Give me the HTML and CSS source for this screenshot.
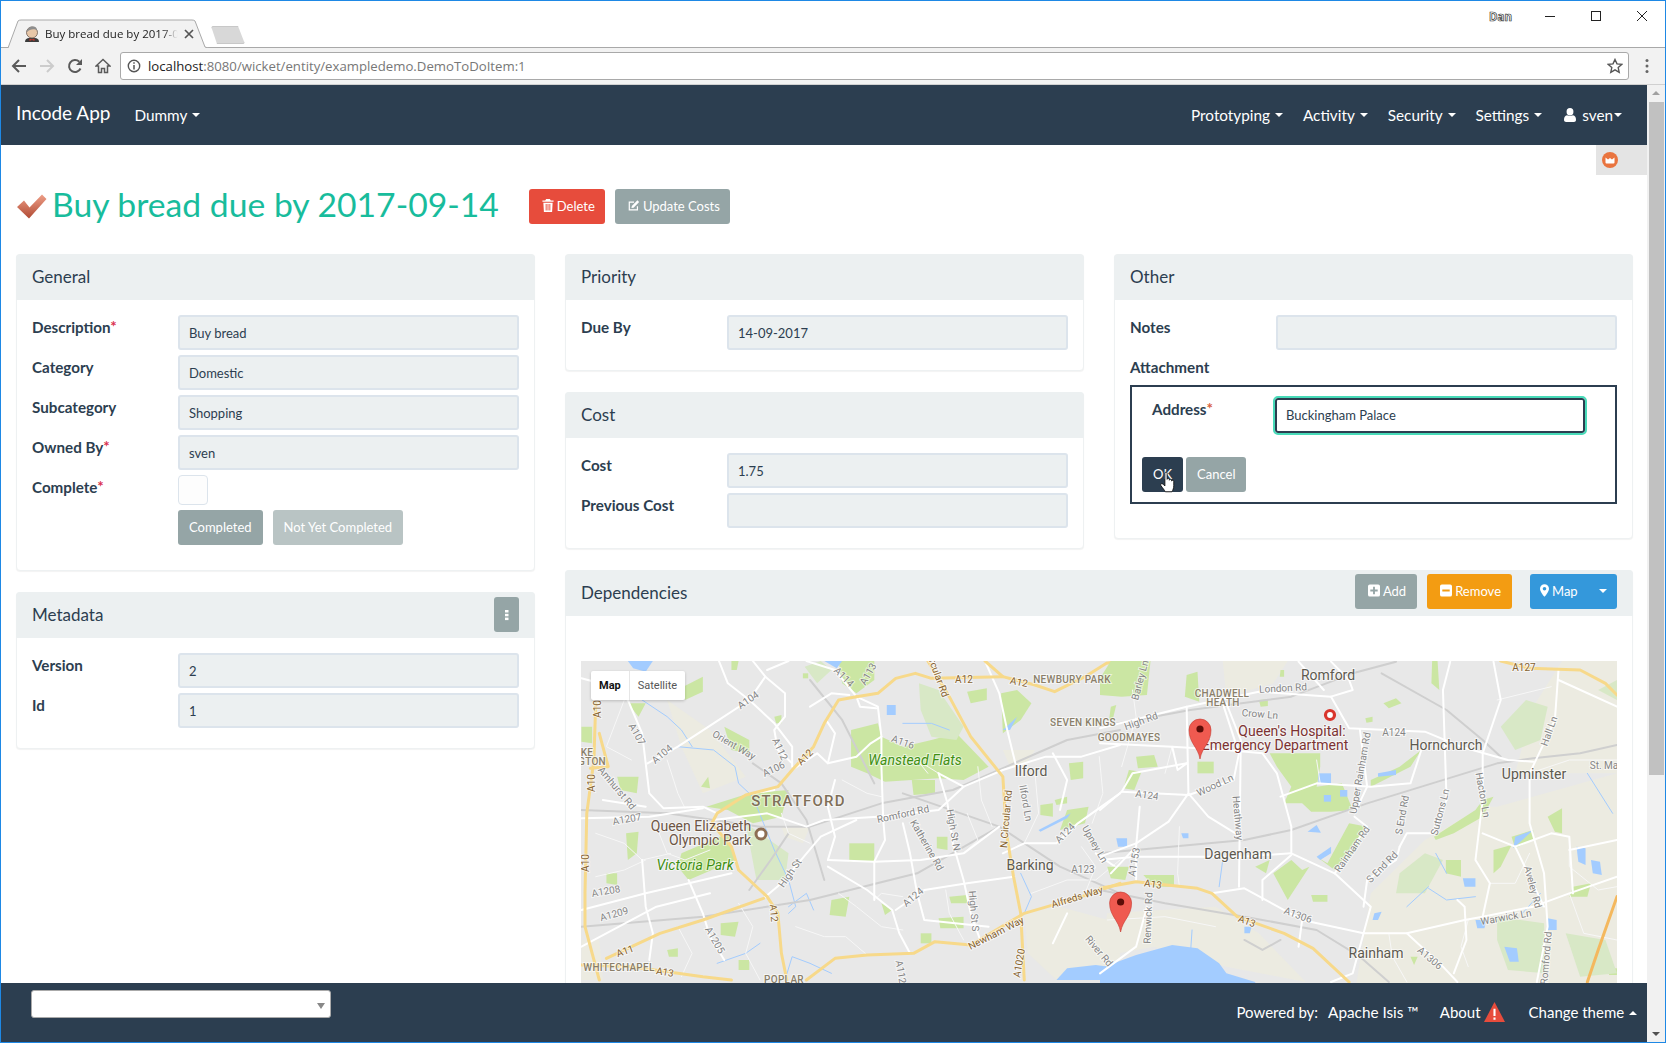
FILE: index.html
```html
<!DOCTYPE html>
<html>
<head>
<meta http-equiv="Content-Type" content="text/html; charset=utf-8"/>
<title>Buy bread due by 2017-09-14</title>
<link rel="stylesheet" href="styles.css">
</head>
<body>
<div class="window">

  <!-- browser chrome -->
  <div class="tabstrip">
    <div class="tab">
      <svg class="tab-shape" viewBox="0 0 206 29"><path d="M0 29h1L11 2q1-1 3-1h171q2 0 3 1l10 26q1 1 8 1" fill="#f2f2f2" stroke="#a9a9a9"/></svg>
      <svg class="favicon" viewBox="0 0 16 16"><path fill="#3b3b3b" d="M1 16c0-3 2-4 4-4l6 0c2 0 4 1 4 4z"/><circle cx="8" cy="6.5" r="5.5" fill="#e8c7a8" stroke="#6b5a50" stroke-width=".8"/><path fill="#8d8d8d" d="M3 6c0-4 3-5.500 6-5.500s4 2 4 4c-2-2-7-2-10 1.500z"/><path fill="#c23b2e" d="M5.500 12.500l2.500 1 2.500-1v2.500l-2.500-1-2.500 1z"/></svg>
      <span class="tab-title">Buy bread due by 2017-0</span>
      <svg class="tab-close" viewBox="0 0 10 10"><path d="M1 1l8 8M9 1l-8 8" stroke="#555" stroke-width="1.700"/></svg>
    </div>
    <div class="newtab"></div>
    <div class="winctl">
      <span class="winuser">Dan</span>
      <svg class="winbtn" viewBox="0 0 12 12"><path d="M1 6.500h10" stroke="#222" stroke-width="1"/></svg>
      <svg class="winbtn" viewBox="0 0 12 12"><rect x="1.500" y="1.500" width="9" height="9" fill="none" stroke="#222" stroke-width="1"/></svg>
      <svg class="winbtn" viewBox="0 0 12 12"><path d="M1 1l10 10M11 1l-10 10" stroke="#222" stroke-width="1"/></svg>
    </div>
  </div>
  <div class="toolbar">
    <svg class="tool" viewBox="0 0 16 16"><path d="M15 8H2M8 2L2 8l6 6" fill="none" stroke="#5a5a5a" stroke-width="2"/></svg>
    <svg class="tool" viewBox="0 0 16 16"><path d="M1 8h13M8 2l6 6-6 6" fill="none" stroke="#ccc" stroke-width="2"/></svg>
    <svg class="tool" viewBox="0 0 16 16"><path d="M13.500 10.500A6 6 0 1 1 12.300 3.800" fill="none" stroke="#5a5a5a" stroke-width="2"/><path d="M15 1v6H9z" fill="#5a5a5a"/></svg>
    <svg class="tool" viewBox="0 0 16 16"><path d="M8 1.500L1 8h2.500v6.500h3v-4h3v4h3V8H15z" fill="none" stroke="#5a5a5a" stroke-width="1.500"/></svg>
    <div class="omnibox">
      <svg class="info" viewBox="0 0 14 14"><circle cx="7" cy="7" r="5.700" fill="none" stroke="#555" stroke-width="1.400"/><path d="M7 6v4.500M7 3.300v1.500" stroke="#555" stroke-width="1.500"/></svg>
      <span class="url"><b>localhost</b>:8080/wicket/entity/exampledemo.DemoToDoItem:1</span>
      <svg class="star" viewBox="0 0 16 16"><path d="M8 1.500l2 4.400 4.700.5-3.500 3.200 1 4.700L8 11.900l-4.200 2.400 1-4.700L1.300 6.400 6 5.900z" fill="none" stroke="#555" stroke-width="1.400"/></svg>
    </div>
    <svg class="kebab" viewBox="0 0 4 16"><circle cx="2" cy="2.500" r="1.500" fill="#666"/><circle cx="2" cy="8" r="1.500" fill="#666"/><circle cx="2" cy="13.500" r="1.500" fill="#666"/></svg>
  </div>

  <div class="viewport">
    <div class="page">

      <nav class="navbar">
        <span class="brand">Incode App</span>
        <a class="navlink">Dummy <i class="caret"></i></a>
        <div class="navright">
          <a class="navlink">Prototyping <i class="caret"></i></a>
          <a class="navlink">Activity <i class="caret"></i></a>
          <a class="navlink">Security <i class="caret"></i></a>
          <a class="navlink">Settings <i class="caret"></i></a>
          <a class="navlink navuser">
            <svg class="ico-user" viewBox="0 0 12 14"><path fill="#fff" d="M6 0a3.300 3.600 0 0 1 0 7.500A3.300 3.600 0 0 1 6 0zM3 7.300c1.800 1 4.200 1 6 0 2 .3 3 2 3 4.700 0 1.300-1 2-2 2H2c-1 0-2-.7-2-2 0-2.700 1-4.400 3-4.700z"/></svg>
            sven<i class="caret"></i>
          </a>
        </div>
      </nav>
      <div class="tray">
        <svg class="tray-ico" viewBox="0 0 16 16"><circle cx="8" cy="8" r="8" fill="#e9743f"/><path d="M3.500 5.500l2.500 2 2-1.500 2 1.500 2.500-2v5q0 1-1 1h-7q-1 0-1-1z" fill="#fff"/></svg>
      </div>

      <main class="content">
        <div class="titlebar">
          <svg class="check" viewBox="0 0 31 25"><defs><linearGradient id="chk" x1="0" y1="0" x2="0" y2="1"><stop offset="0" stop-color="#ee9f88"/><stop offset="1" stop-color="#b04a33"/></linearGradient></defs><path fill="url(#chk)" d="M1 13l7-6.500 5.500 7L26 .5l4.500 4.500L13 24.500z"/></svg>
          <h1 class="title">Buy bread due by 2017-09-14</h1>
          <button class="btn btn-ic btn-red btn-first">
            <svg class="ico" viewBox="0 0 12 14"><path fill="#fff" d="M4 0h4l1 1.500h3V3H0V1.500h3zM1 4h10l-.6 10H1.600zM3.500 5.500v7h1v-7zM5.500 5.500v7h1v-7zM7.500 5.500v7h1v-7z" fill-rule="evenodd"/></svg>Delete
          </button>
          <button class="btn btn-ic btn-grey">
            <svg class="ico" viewBox="0 0 14 14"><path fill="none" stroke="#fff" stroke-width="1.400" d="M11 8v4H1.500V3H7"/><path fill="#fff" d="M4.500 7.500L11 1l2 2-6.500 6.500-2.500.5z"/></svg>Update Costs
          </button>
        </div>

        <div class="grid">
          <div class="col col-left">
            <section class="panel">
              <div class="panel-head">General</div>
              <div class="panel-body">
                <div class="field"><label>Description<em>*</em></label><div class="input">Buy bread</div></div>
                <div class="field"><label>Category</label><div class="input">Domestic</div></div>
                <div class="field"><label>Subcategory</label><div class="input">Shopping</div></div>
                <div class="field"><label>Owned By<em>*</em></label><div class="input">sven</div></div>
                <div class="field"><label>Complete<em>*</em></label><div class="checkbox"></div></div>
                <div class="field actions">
                  <span></span>
                  <div class="btnrow">
                    <button class="btn btn-grey">Completed</button>
                    <button class="btn btn-grey btn-off">Not Yet Completed</button>
                  </div>
                </div>
              </div>
            </section>
            <section class="panel">
              <div class="panel-head">Metadata
                <button class="btn btn-grey btn-dots"><svg viewBox="0 0 4 12" width="4" height="12"><rect y="1" width="3.500" height="2.500" fill="#fff"/><rect y="4.800" width="3.500" height="2.500" fill="#fff"/><rect y="8.600" width="3.500" height="2.500" fill="#fff"/></svg></button>
              </div>
              <div class="panel-body">
                <div class="field"><label>Version</label><div class="input">2</div></div>
                <div class="field"><label>Id</label><div class="input">1</div></div>
              </div>
            </section>
          </div>

          <div class="col col-mid">
            <section class="panel">
              <div class="panel-head">Priority</div>
              <div class="panel-body">
                <div class="field"><label>Due By</label><div class="input">14-09-2017</div></div>
              </div>
            </section>
            <section class="panel">
              <div class="panel-head">Cost</div>
              <div class="panel-body">
                <div class="field"><label>Cost</label><div class="input">1.75</div></div>
                <div class="field"><label>Previous Cost</label><div class="input"></div></div>
              </div>
            </section>
          </div>

          <div class="col col-right">
            <section class="panel">
              <div class="panel-head">Other</div>
              <div class="panel-body body-other">
                <div class="field"><label>Notes</label><div class="input"></div></div>
                <div class="field"><label>Attachment</label></div>
                <div class="dialog">
                  <div class="dialog-row">
                    <label>Address<em class="em-orange">*</em></label>
                    <div class="input input-focus">Buckingham Palace</div>
                  </div>
                  <div class="dialog-btns">
                    <button class="btn btn-navy">OK</button>
                    <button class="btn btn-grey">Cancel</button>
                    <svg class="hand" viewBox="0 0 18 24"><path fill="#fff" stroke="#111" stroke-width="1" d="M5.500 2c0-1.500 2.500-1.500 2.500 0v7c0-1.500 2.500-1.500 2.500 0v1c0-1.300 2.500-1.300 2.500 0v1c0-1.300 2.500-1.300 2.500 0v5c0 3-1 5-2 7H6c-1-2-3-4-5-7-1-1.500 1-3 2.500-1.500l2 2z"/></svg>
                  </div>
                </div>
              </div>
            </section>
          </div>

          <section class="panel panel-deps">
            <div class="panel-head head-deps">
              <span>Dependencies</span>
              <div class="head-btns">
                <button class="btn btn-ic btn-grey">
                  <svg class="ico" viewBox="0 0 13 13"><path fill="#fff" fill-rule="evenodd" d="M2 0h9a2 2 0 0 1 2 2v9a2 2 0 0 1-2 2H2a2 2 0 0 1-2-2V2a2 2 0 0 1 2-2zM5.500 2.500v3h-3v2h3v3h2v-3h3v-2h-3v-3z"/></svg>Add
                </button>
                <button class="btn btn-ic btn-orange">
                  <svg class="ico" viewBox="0 0 13 13"><path fill="#fff" fill-rule="evenodd" d="M2 0h9a2 2 0 0 1 2 2v9a2 2 0 0 1-2 2H2a2 2 0 0 1-2-2V2a2 2 0 0 1 2-2zM2.500 5.500v2h8v-2z"/></svg>Remove
                </button>
                <button class="btn btn-blue">
                  <svg class="ico ico-pin" viewBox="0 0 10 14"><path fill="#fff" fill-rule="evenodd" d="M5 0a5 5 0 0 1 5 5c0 2.500-3 7-5 9-2-2-5-6.500-5-9a5 5 0 0 1 5-5zm0 3a2 2 0 1 0 0 4 2 2 0 0 0 0-4z"/></svg>Map<i class="caret caret-map"></i>
                </button>
              </div>
            </div>
            <div class="panel-body body-map">
              <div class="map">
                <svg class="mapsvg" viewBox="581 661 1036 340" width="1036" height="340">
                  <rect x="581" y="661" width="1036" height="340" fill="#e8e8e8"/>

                  <!-- left half, traced in crop coordinates -->
                  <g transform="translate(560 560) scale(.35714 .33333)">
                    <g class="beige">
                      <polygon points="300,420 420,510 520,650 400,700 340,560"/>
                      <polygon points="620,800 700,800 680,850 630,830"/>
                      <polygon points="1240,570 1330,570 1300,620 1260,620"/>
                      <polygon points="60,1140 110,1140 120,1260 60,1260"/>
                      <polygon points="1300,1060 1400,1040 1568,1090 1568,1260 1390,1260 1310,1180"/>
                    </g>
                    <g class="park">
                      <polygon points="815,510 890,490 900,530 960,560 1040,540 1110,520 1200,620 1130,660 1060,655 910,665 860,640 815,620"/>
                      <polygon points="780,303 880,303 880,360 830,400 790,370"/>
                      <polygon points="1140,395 1195,385 1195,420 1150,430"/>
                      <polygon points="1235,400 1280,390 1320,430 1290,480 1240,520"/>
                      <polygon points="345,380 400,350 400,395 350,420"/>
                      <polygon points="190,430 240,430 220,470"/>
                      <polygon points="60,500 90,500 90,550 60,545"/>
                      <polygon points="460,500 530,540 530,580 480,570"/>
                      <polygon points="160,650 220,650 215,700 170,690"/>
                      <polygon points="410,740 530,700 640,690 620,770 540,790 470,750"/>
                      <polygon points="340,880 470,820 490,900 360,960 330,920"/>
                      <polygon points="810,850 880,850 880,905 810,905"/>
                      <polygon points="185,820 220,815 215,880 190,900"/>
                      <polygon points="1425,610 1465,605 1465,655 1430,660"/>
                      <polygon points="1345,735 1380,730 1380,770 1345,765"/>
                      <polygon points="1385,720 1420,710 1420,730 1390,735"/>
                      <polygon points="1420,750 1480,740 1470,790 1400,810"/>
                      <polygon points="1055,830 1085,830 1085,870 1055,865"/>
                      <polygon points="760,1020 810,1010 800,1070 755,1065"/>
                      <polygon points="1060,1075 1130,1070 1130,1105 1065,1105"/>
                      <polygon points="450,1090 500,1085 490,1130 450,1125"/>
                      <polygon points="1090,1010 1140,1005 1140,1030 1095,1030"/>
                      <polygon points="300,1170 330,1165 330,1190 305,1190"/>
                      <polygon points="500,1200 530,1200 530,1230 500,1230"/>
                      <polygon points="985,660 1050,660 1050,700 990,705"/>
                      <polygon points="480,303 500,303 495,330 480,330"/>
                      <polygon points="680,340 695,340 695,355 680,355"/>
                      <polygon points="600,470 620,465 620,490 605,490"/>
                      <polygon points="130,940 160,940 160,975 130,970"/>
                      <polygon points="395,680 415,650 420,685"/>
                      <polygon points="1010,1120 1040,1120 1040,1150 1010,1150"/>
                      <polygon points="900,1030 930,1050 910,1065"/>
                    </g>
                    <g class="park-pale">
                      <polygon points="1005,370 1060,390 1130,500 1110,540 1040,530 1010,450"/>
                      <polygon points="520,790 640,880 630,960 550,960"/>
                      <polygon points="730,303 760,330 720,370 685,320"/>
                    </g>
                    <g class="water">
                      <polygon points="190,303 260,303 240,335 205,325"/>
                      <polygon points="915,435 940,435 940,465 915,465"/>
                      <polygon points="740,303 790,303 775,325"/>
                      <polygon points="1240,510 1280,470 1260,510"/>
                      <polygon points="1340,810 1430,760 1420,775 1345,815"/>
                      <polygon points="1390,1260 1420,1225 1500,1215 1568,1225 1568,1260"/>
                    </g>
                    <g class="stream">
                      <polyline points="330,560 430,570 490,620 500,670 540,710 570,790 600,870 640,960 660,1040 640,1060"/>
                      <polyline points="230,420 300,470 340,510 370,560"/>
                      <polyline points="630,1260 650,1190 700,1210 760,1240"/>
                      <polyline points="960,490 1040,490 1090,510"/>
                      <polyline points="1290,940 1320,1010 1300,1060"/>
                      <polyline points="640,1040 690,1000 710,1050"/>
                      <polyline points="440,1210 520,1180 560,1150"/>
                    </g>
                    <g class="rail">
                      <polyline points="60,750 300,760 560,800 700,800 900,730 1100,690 1250,620 1420,540 1568,510"/>
                      <polyline points="960,700 1230,800 1400,920 1568,1000"/>
                      <polyline points="60,1100 400,1070 700,1020 1000,940 1230,800"/>
                      <polyline points="640,820 590,900 530,990"/>
                      <polyline points="540,610 620,670 690,780 740,960"/>
                      <polyline points="700,360 790,480 880,670"/>
                    </g>
                    <g class="rd rd-min">
                      <polyline points="120,340 180,420 130,560 200,600"/>
                      <polyline points="300,600 330,700 350,745"/>
                      <polyline points="270,800 300,880 350,900 420,870"/>
                      <polyline points="100,820 180,850 230,900 310,880"/>
                      <polyline points="100,950 180,930 240,900"/>
                      <polyline points="330,1100 370,1180 340,1250"/>
                      <polyline points="500,1030 540,1100 520,1180 560,1260"/>
                      <polyline points="660,1100 740,1130 800,1130 860,1185"/>
                      <polyline points="780,1000 830,1040 900,1100 960,1110"/>
                      <polyline points="1080,990 1090,1060 1130,1140"/>
                      <polyline points="1030,640 1000,600 1060,640"/>
                      <polyline points="1140,760 1170,840 1130,880"/>
                      <polyline points="1170,620 1180,720 1210,800"/>
                      <polyline points="1330,640 1340,760 1300,850"/>
                      <polyline points="1460,860 1500,920 1470,1000"/>
                      <polyline points="1320,1000 1420,960 1500,960 1568,900"/>
                      <polyline points="1510,590 1520,700 1490,790"/>
                      <polyline points="790,660 860,700 900,710"/>
                      <polyline points="620,760 640,820 700,850"/>
                      <polyline points="960,1010 900,1000 880,1020"/>
                    </g>
                    <g class="rd">
                      <polyline points="60,355 130,375 190,420 230,520 240,610 250,700 290,745 400,740 440,760"/>
                      <polyline points="245,610 330,560 430,490 530,420 575,350 540,303"/>
                      <polyline points="530,420 600,490 650,560 650,620"/>
                      <polyline points="445,303 470,370 530,420"/>
                      <polyline points="575,350 630,400 630,470 600,510 610,570 650,610"/>
                      <polyline points="640,303 580,330"/>
                      <polyline points="690,303 770,330 830,410"/>
                      <polyline points="700,440 760,400 810,405"/>
                      <polyline points="830,410 890,440 900,530 900,620 905,780 910,840 880,905 880,1020"/>
                      <polyline points="60,775 250,770 400,745"/>
                      <polyline points="430,780 580,760 690,800 740,780 890,770 1060,750 1130,680 1240,630 1360,590 1460,590 1568,555"/>
                      <polyline points="570,1015 620,970 730,830 830,780"/>
                      <polyline points="750,900 880,905 1010,900 1130,880 1230,800"/>
                      <polyline points="750,920 860,990 930,1050 950,1120 980,1180"/>
                      <polyline points="940,1050 1020,990 1140,970 1270,950"/>
                      <polyline points="1060,640 1085,730 1100,850 1130,960 1150,1060 1180,1150"/>
                      <polyline points="650,630 720,580 750,610 830,590 870,550 900,530"/>
                      <polyline points="750,610 770,520 745,480"/>
                      <polyline points="770,660 750,740 770,830 750,900"/>
                      <polyline points="60,1050 240,1000 400,960 480,940"/>
                      <polyline points="230,900 240,1040 260,1120 250,1200"/>
                      <polyline points="360,960 400,1060 420,1130 460,1200"/>
                      <polyline points="60,1160 270,1040 420,1000"/>
                      <polyline points="1240,880 1300,850 1390,850 1450,790 1568,700"/>
                      <polyline points="960,790 980,880 1000,1000 1020,1080 1200,1100"/>
                      <polyline points="1190,303 1230,400 1250,500 1275,610"/>
                      <polyline points="1380,580 1420,660 1400,750"/>
                      <polyline points="1060,640 1130,680"/>
                      <polyline points="540,700 600,690"/>
                      <polyline points="120,720 240,740"/>
                      <polyline points="830,410 840,440 885,445"/>
                      <polyline points="1500,880 1568,930"/>
                      <polyline points="1380,1150 1420,1060"/>
                    </g>
                    <g class="mw">
                      <polyline points="830,410 780,420 740,490 710,560 650,630 610,680 520,705 440,760 425,790 480,860 500,930 580,1010 610,1060 620,1180 635,1260"/>
                      <polyline points="830,410 890,400 940,355 995,340 1040,355 1240,350 1330,375 1385,395 1470,350 1530,310 1568,303"/>
                      <polyline points="1190,303 1240,350"/>
                      <polyline points="1030,303 1090,410 1150,530 1240,650 1250,820 1270,950 1290,1060 1300,1260"/>
                      <polyline points="100,430 95,600 75,760 70,1000 70,1100 110,1260"/>
                      <polyline points="110,520 135,620 85,625"/>
                      <polyline points="130,1195 280,1120 400,1080 570,1015"/>
                      <polyline points="60,1215 200,1220 400,1250 480,1260"/>
                      <polyline points="690,1260 770,1195 860,1185 990,1180 1050,1145 1150,1155 1300,1060 1460,1010 1568,970"/>
                    </g>
                  </g>

                  <!-- right half -->
                  <g transform="translate(1100 640) scale(.36101 .33333)">
                    <g class="beige">
                      <polygon points="750,760 900,600 1060,500 1100,500 1432,400 1432,1100 700,1100"/>
                      <polygon points="1280,63 1432,63 1432,400 1150,400 1200,200"/>
                      <polygon points="20,820 320,800 440,880 570,1026 350,980 150,920 0,950"/>
                      <polygon points="340,63 520,63 480,130 350,170"/>
                    </g>
                    <g class="park">
                      <polygon points="0,115 30,63 140,63 130,165 60,170 0,165"/>
                      <polygon points="240,105 270,95 275,185 235,170"/>
                      <polygon points="100,350 150,345 160,380 105,385"/>
                      <polygon points="80,390 115,395 95,450 65,445"/>
                      <polygon points="270,365 315,365 315,400 270,400"/>
                      <polygon points="470,340 610,340 610,380 600,440 670,430 700,510 640,515 585,515 560,490 510,490 530,440 490,380"/>
                      <polygon points="750,420 830,380 890,330 860,380 750,440"/>
                      <polygon points="630,670 690,550 740,560 700,640 650,690 600,650"/>
                      <polygon points="480,700 530,660 560,690 580,680 520,780"/>
                      <polygon points="925,590 1040,510 1060,480 1090,470 1060,530 980,580 930,600"/>
                      <polygon points="958,660 1000,660 1000,710 958,700"/>
                      <polygon points="1140,590 1200,570 1200,600 1150,625"/>
                      <polygon points="920,63 935,63 940,150 918,130"/>
                      <polygon points="785,190 820,175 835,190 800,205"/>
                      <polygon points="430,680 470,660 460,700"/>
                      <polygon points="20,680 80,680 70,720 30,715"/>
                      <polygon points="120,705 205,705 205,740 150,740"/>
                      <polygon points="585,765 630,765 630,785 590,785"/>
                      <polygon points="1240,530 1280,505 1280,580 1260,575"/>
                      <polygon points="1090,630 1140,615 1110,680 1090,700"/>
                      <polygon points="735,235 755,230 755,245 738,248"/>
                      <polygon points="440,180 465,178 465,198 445,200"/>
                      <polygon points="500,90 510,90 510,110 498,110"/>
                      <polygon points="30,200 45,195 35,240 25,240"/>
                      <polygon points="860,950 880,950 870,975"/>
                      <polygon points="1410,985 1432,985 1432,1005 1410,1005"/>
                      <polygon points="1310,740 1360,730 1350,770 1300,770"/>
                    </g>
                    <g class="park-pale">
                      <polygon points="1100,830 1230,850 1235,1000 1130,990 1100,900"/>
                      <polygon points="1180,180 1240,200 1220,300 1150,330 1110,260"/>
                      <polygon points="830,700 900,640 950,660 900,760 820,760"/>
                      <polygon points="1380,150 1432,120 1432,180"/>
                      <polygon points="1290,880 1400,900 1432,1000 1330,1010"/>
                    </g>
                    <g class="water">
                      <polygon points="45,595 75,595 75,620 50,620"/>
                      <polygon points="575,575 600,555 612,578"/>
                      <polygon points="605,400 640,400 640,430 605,430"/>
                      <polygon points="1320,620 1345,625 1345,675 1325,665"/>
                      <polygon points="1360,660 1385,665 1390,705 1365,700"/>
                      <polygon points="1005,715 1040,715 1040,740 1010,740"/>
                      <polygon points="1120,920 1155,925 1160,965 1135,965"/>
                      <polygon points="1240,835 1265,840 1265,870 1240,870"/>
                      <polygon points="0,985 100,945 200,915 270,925 330,970 350,1000 430,1026 430,1100 0,1100"/>
                      <polygon points="225,580 245,580 245,595 230,595"/>
                      <polygon points="400,860 420,860 415,880 400,880"/>
                      <polygon points="620,465 640,465 640,485 620,485"/>
                      <polygon points="665,450 685,450 685,470 665,470"/>
                      <polygon points="600,650 640,620 640,640 610,660"/>
                      <polygon points="770,400 820,390 820,405 770,410"/>
                      <polygon points="760,820 780,815 770,840 755,840"/>
                      <polygon points="1150,590 1200,570 1160,610 1145,625"/>
                      <polygon points="1040,840 1070,840 1065,865 1045,865"/>
                    </g>
                    <g class="stream">
                      <polyline points="850,800 910,740"/>
                      <polyline points="910,745 960,780 1040,770"/>
                      <polyline points="930,640 960,700"/>
                      <polyline points="340,660 330,740"/>
                      <polyline points="1170,820 1220,760"/>
                      <polyline points="1350,400 1420,520"/>
                      <polyline points="255,870 250,950"/>
                    </g>
                    <g class="rail">
                      <polyline points="0,260 250,210 530,170 700,100 820,65"/>
                      <polyline points="0,640 400,600 530,570 740,490 1100,370 1200,355 1330,340 1432,315"/>
                      <polyline points="0,750 180,790 400,830 600,870 720,950 800,1026"/>
                      <polyline points="780,100 960,210 1060,300 1110,350"/>
                      <polyline points="400,900 450,930 500,900"/>
                    </g>
                    <g class="rd rd-min">
                      <polyline points="1300,590 1300,680 1380,750 1432,740"/>
                      <polyline points="1080,730 1150,730 1190,640"/>
                      <polyline points="1020,840 1000,920 1020,980"/>
                      <polyline points="90,150 100,230 60,380"/>
                      <polyline points="200,320 180,400"/>
                      <polyline points="600,360 610,430"/>
                      <polyline points="1432,360 1300,360 1190,400"/>
                      <polyline points="220,560 215,700 220,740"/>
                      <polyline points="800,880 810,950 850,1026"/>
                      <polyline points="1100,180 1250,140"/>
                      <polyline points="20,840 180,830 320,860"/>
                      <polyline points="1300,760 1340,880 1432,900"/>
                    </g>
                    <g class="rd">
                      <polyline points="0,265 240,200 440,155 640,170 700,150 690,120 640,65"/>
                      <polyline points="640,170 690,265 900,275 1000,320 1130,360 1200,365"/>
                      <polyline points="0,310 200,320 350,330 450,340 490,400 530,560 530,640 650,700 750,800 730,880 560,840 400,745 310,760"/>
                      <polyline points="240,200 245,460 190,545 100,610 0,650"/>
                      <polyline points="245,460 300,530 390,590"/>
                      <polyline points="60,455 245,465 370,420 385,340 340,190"/>
                      <polyline points="350,190 390,300 385,740"/>
                      <polyline points="0,510 60,455 90,400 240,370"/>
                      <polyline points="30,700 100,620 110,500"/>
                      <polyline points="530,645 450,720 450,780"/>
                      <polyline points="500,470 600,430 750,440 860,430 890,330"/>
                      <polyline points="705,520 740,440 720,270"/>
                      <polyline points="705,530 740,560 650,700"/>
                      <polyline points="730,880 850,880 1010,840 1060,830 1200,800 1300,760 1432,710"/>
                      <polyline points="730,880 700,1000 640,1026"/>
                      <polyline points="850,880 950,980 990,1026"/>
                      <polyline points="830,620 850,580 920,580 960,480 950,150 970,65"/>
                      <polyline points="1060,580 1150,620 1250,580 1300,590 1310,760"/>
                      <polyline points="1090,65 1110,180 1060,340 1060,480 1040,660 1080,730 1060,830"/>
                      <polyline points="1270,90 1260,240 1190,400 1190,550 1230,700 1240,860 1210,1026"/>
                      <polyline points="1150,620 1230,800"/>
                      <polyline points="990,780 1010,800 1015,900 980,1000"/>
                      <polyline points="830,620 820,660 740,720 730,800"/>
                      <polyline points="550,920 560,840"/>
                      <polyline points="1432,600 1300,630"/>
                      <polyline points="0,1000 100,920 130,800"/>
                      <polyline points="530,640 390,650 100,650 0,660"/>
                      <polyline points="100,630 100,720"/>
                      <polyline points="550,65 620,150"/>
                      <polyline points="200,320 215,390 240,370"/>
                      <polyline points="1432,200 1270,120"/>
                    </g>
                    <g class="mw">
                      <polyline points="0,745 100,725 270,745 310,760 380,830 510,880 590,925 690,1026"/>
                      <polyline points="1110,63 1190,85 1330,90 1400,130 1432,165"/>
                    </g>
                    <polyline class="mway" points="1432,770 1380,930 1350,1026"/>
                  </g>

                  <!-- labels -->
                  <g class="lb">
                    <text transform="translate(844 677) rotate(45)">A114</text>
                    <text transform="translate(868 674) rotate(-60)">A113</text>
                    <text class="lb-rn" transform="translate(939 678) rotate(70)">rcular Rd</text>
                    <text class="lb-rn" x="964" y="679">A12</text>
                    <text class="lb-rn" transform="translate(1019 682) rotate(12)">A12</text>
                    <text class="lb-area" x="1072" y="679">NEWBURY PARK</text>
                    <text class="lb-rn" transform="translate(597.5 709) rotate(-90)">A10</text>
                    <text transform="translate(748 700) rotate(-35)">A104</text>
                    <text transform="translate(637 734) rotate(60)">A107</text>
                    <text transform="translate(734 745) rotate(30)">Orient Way</text>
                    <text transform="translate(780 749) rotate(65)">A112</text>
                    <text class="lb-area" x="587" y="752">KE</text>
                    <text class="lb-area" x="592" y="761">GTON</text>
                    <text transform="translate(662 754) rotate(-40)">A104</text>
                    <text transform="translate(903 742) rotate(20)">A116</text>
                    <text class="lb-park" x="915" y="760">Wanstead Flats</text>
                    <text class="lb-rn" transform="translate(805 757) rotate(-45)">A12</text>
                    <text transform="translate(773.500 769) rotate(-25)">A106</text>
                    <text class="lb-area" x="1083" y="722">SEVEN KINGS</text>
                    <text class="lb-area" x="1129" y="737">GOODMAYES</text>
                    <text class="lb-town" x="1031" y="771">Ilford</text>
                    <text transform="translate(1026 803) rotate(80)">Ilford Ln</text>
                    <text class="lb-rn" transform="translate(591 783) rotate(-90)">A10</text>
                    <text transform="translate(617 788) rotate(50)">Amhurst Rd</text>
                    <text class="lb-big" x="798.500" y="801">STRATFORD</text>
                    <text transform="translate(627 819) rotate(-10)">A1207</text>
                    <text transform="translate(903 814) rotate(-12)">Romford Rd</text>
                    <text class="lb-rn" transform="translate(1006 819) rotate(-85)">N Circular Rd</text>
                    <text class="lb-poi" x="701" y="826">Queen Elizabeth</text>
                    <text class="lb-poi" x="710" y="840">Olympic Park</text>
                    <text transform="translate(927 845) rotate(60)">Katherine Rd</text>
                    <text transform="translate(953.600 830) rotate(80)">High St N</text>
                    <text transform="translate(1065 833) rotate(-45)">A124</text>
                    <text transform="translate(1095 844) rotate(60)">Upney Ln</text>
                    <text class="lb-park" x="695" y="865">Victoria Park</text>
                    <text class="lb-town" x="1030" y="865">Barking</text>
                    <text x="1083" y="869">A123</text>
                    <text class="lb-rn" transform="translate(585 863) rotate(-90)">A10</text>
                    <text transform="translate(790 873) rotate(-55)">High St</text>
                    <text transform="translate(606 891) rotate(-10)">A1208</text>
                    <text transform="translate(913 897) rotate(-40)">A124</text>
                    <text class="lb-rn" transform="translate(1077 897) rotate(-17)">Alfreds Way</text>
                    <text transform="translate(974 911) rotate(85)">High St S</text>
                    <text transform="translate(614 914) rotate(-15)">A1209</text>
                    <text class="lb-rn" transform="translate(774 913) rotate(85)">A12</text>
                    <text transform="translate(715 940) rotate(60)">A1205</text>
                    <text class="lb-rn" transform="translate(996 933) rotate(-27)">Newham Way</text>
                    <text transform="translate(1099 951) rotate(50)">River Rd</text>
                    <text class="lb-rn" transform="translate(625 951) rotate(-20)">A11</text>
                    <text class="lb-area" x="619" y="967">WHITECHAPEL</text>
                    <text class="lb-rn" transform="translate(665 972) rotate(10)">A13</text>
                    <text class="lb-area" x="784" y="979">POPLAR</text>
                    <text class="lb-rn" transform="translate(1019 963) rotate(-80)">A1020</text>
                    <text transform="translate(901 972) rotate(80)">A112</text>

                    <text transform="translate(1140 680) rotate(-75)">Barley Ln</text>
                    <text class="lb-town" x="1328" y="675">Romford</text>
                    <text class="lb-area" x="1222" y="693">CHADWELL</text>
                    <text class="lb-area" x="1223" y="702">HEATH</text>
                    <text transform="translate(1283 688) rotate(-3)">London Rd</text>
                    <text transform="translate(1260 714) rotate(5)">Crow Ln</text>
                    <text transform="translate(1141 721) rotate(-20)">High Rd</text>
                    <text x="1394" y="732">A124</text>
                    <text transform="translate(1360 773) rotate(-80)">Upper Rainham Rd</text>
                    <text class="lb-town" x="1446" y="745">Hornchurch</text>
                    <text transform="translate(1549 731) rotate(-70)">Hall Ln</text>
                    <text x="1604" y="765">St. Ma</text>
                    <text class="lb-town" x="1534" y="774">Upminster</text>
                    <text transform="translate(1215 785) rotate(-25)">Wood Ln</text>
                    <text transform="translate(1147 795) rotate(8)">A124</text>
                    <text transform="translate(1238 818) rotate(85)">Heathway</text>
                    <text transform="translate(1483 795) rotate(80)">Hacton Ln</text>
                    <text transform="translate(1402 815) rotate(-80)">S End Rd</text>
                    <text transform="translate(1440 812) rotate(-75)">Suttons Ln</text>
                    <text transform="translate(1352 849) rotate(-55)">Rainham Rd</text>
                    <text class="lb-town" x="1238" y="854">Dagenham</text>
                    <text transform="translate(1382 867) rotate(-45)">S End Rd</text>
                    <text transform="translate(1134 862) rotate(-80)">A1153</text>
                    <text transform="translate(1533 887) rotate(75)">Aveley Rd</text>
                    <text class="lb-rn" transform="translate(1153 884) rotate(8)">A13</text>
                    <text class="lb-rn" transform="translate(1247 921) rotate(20)">A13</text>
                    <text transform="translate(1298 915) rotate(20)">A1306</text>
                    <text transform="translate(1506 917) rotate(-10)">Warwick Ln</text>
                    <text transform="translate(1148 918) rotate(-88)">Renwick Rd</text>
                    <text class="lb-town" x="1376" y="953">Rainham</text>
                    <text transform="translate(1430 958) rotate(40)">A1306</text>
                    <text transform="translate(1546 958) rotate(-85)">Romford Rd</text>
                    <text class="lb-rn" x="1524" y="667">A127</text>
                    <text class="lb-hosp" x="1292" y="731">Queen's Hospital:</text>
                    <text class="lb-hosp" x="1275" y="745">Emergency Department</text>
                  </g>

                  <!-- places and pins -->
                  <circle cx="761" cy="834" r="5" fill="#fff" stroke="#8d6e54" stroke-width="3"/>
                  <circle cx="1330" cy="715" r="4.500" fill="#fff" stroke="#d9352c" stroke-width="3.200"/>
                  <g class="pin" transform="translate(1200 759)"><path d="M0 0C-2-12-11-16-11-29a11 11 0 0 1 22 0C11-16 2-12 0 0z"/><circle cy="-30" r="3.600"/></g>
                  <g class="pin" transform="translate(1120.600 932)"><path d="M0 0C-2-12-11-16-11-29a11 11 0 0 1 22 0C11-16 2-12 0 0z"/><circle cy="-30" r="3.600"/></g>
                </svg>
                <div class="maptype"><span class="maptype-on">Map</span><span>Satellite</span></div>
              </div>
            </div>
          </section>
        </div>
      </main>

      <footer class="footer">
        <div class="themebox"><i class="themebox-arrow"></i></div>
        <div class="footright">
          <span class="foot-pow">Powered by:</span>
          <span class="foot-isis">Apache Isis ™</span>
          <span class="foot-about">About</span>
          <svg class="warn" viewBox="0 0 20 18" preserveAspectRatio="none"><path fill="#e74c3c" d="M10 0l10 18H0z"/><path fill="#fff" d="M9 6h2v6.500H9zM9 14h2v2H9z"/></svg>
          <span class="foot-theme">Change theme <i class="caret caret-up"></i></span>
        </div>
      </footer>
    </div>

    <div class="scrollbar">
      <i class="arrow arrow-up"></i>
      <div class="track"><div class="thumb"></div></div>
      <i class="arrow arrow-down"></i>
    </div>
  </div>
</div>
</body>
</html>
```

FILE: styles.css
```css
* {
  box-sizing: border-box;
}

html, body {
  margin: 0;
  height: 100%;
  overflow: hidden;
}

body {
  font-family: Lato, "Open Sans", sans-serif;
  font-size: 15px;
  color: #2c3e50;
  background-color: white;
}

.window {
  height: 1043px;
  border: 1px solid #1e88e5;
  display: flex;
  flex-direction: column;
  overflow: hidden;
}

/* browser chrome */
.tabstrip {
  height: 47px;
  flex: none;
  display: flex;
  align-items: flex-end;
  background-color: white;
  border-bottom: 1px solid #a9a9a9;
  padding-left: 6px;
  position: relative;
}

.tab {
  width: 206px;
  height: 29px;
  margin-bottom: -1px;
  display: flex;
  align-items: center;
  padding-left: 17px;
  font-family: "Open Sans", sans-serif;
  font-size: 12px;
  color: #222;
  position: relative;
}

.tab-shape {
  position: absolute;
  left: 0;
  top: 0;
  width: 206px;
  height: 29px;
}

.favicon {
  width: 16px;
  height: 16px;
  margin-right: 5px;
  flex: none;
  position: relative;
}

.tab-title {
  white-space: nowrap;
  font-size: 11.5px;
  position: relative;
  -webkit-mask-image: linear-gradient(90deg, #000 88%, transparent 99%);
  mask-image: linear-gradient(90deg, #000 88%, transparent 99%);
}

.tab-close {
  width: 10px;
  height: 10px;
  margin-left: 5px;
  position: relative;
}

.newtab {
  width: 34px;
  height: 18px;
  margin: 0 0 3px -2px;
  background-color: #d8d8d8;
  border: 1px solid #c8c8c8;
  border-radius: 2px;
  clip-path: polygon(0 0, 27px 0, 34px 100%, 6px 100%);
}

.winctl {
  position: absolute;
  top: 0;
  right: 0;
  height: 30px;
  display: flex;
  align-items: center;
}

.winuser {
  font-family: "Open Sans", sans-serif;
  font-size: 11.5px;
  font-weight: bold;
  color: #fff;
  -webkit-text-stroke: .7px #333;
  margin-right: 32px;
}

.winbtn {
  width: 12px;
  height: 12px;
  margin-right: 34px;
}

.winbtn:last-child {
  margin-right: 17px;
}

.toolbar {
  height: 37px;
  flex: none;
  display: flex;
  align-items: center;
  background-color: #f2f2f2;
  border-bottom: 1px solid #d0d0d0;
  padding-left: 10px;
}

.tool {
  width: 16px;
  height: 16px;
  margin-right: 12px;
  flex: none;
}

.omnibox {
  width: 1509px;
  height: 28px;
  margin-left: -3px;
  background-color: white;
  border: 1px solid #a9a9a9;
  border-radius: 3px;
  display: flex;
  align-items: center;
  padding-left: 6px;
  flex: none;
}

.info {
  width: 14px;
  height: 14px;
  margin-right: 7px;
}

.url {
  font-family: "Open Sans", sans-serif;
  font-size: 13.2px;
  color: #777;
  flex: 1;
}

.url b {
  font-weight: normal;
  color: #222;
}

.star {
  width: 16px;
  height: 16px;
  margin-right: 5px;
}

.kebab {
  width: 4px;
  height: 16px;
  margin-left: 16px;
}

.viewport {
  flex: 1;
  display: flex;
  min-height: 0;
}

.page {
  flex: 1;
  min-width: 0;
  display: flex;
  flex-direction: column;
  position: relative;
}

/* navbar */
.navbar {
  height: 60px;
  flex: none;
  background-color: #2c3e50;
  color: white;
  display: flex;
  align-items: center;
  padding: 0 0 0 15px;
}

.brand {
  font-size: 19px;
  margin: -5px 24px 0 0;
}

.navlink {
  font-size: 15.3px;
  display: flex;
  align-items: center;
  white-space: nowrap;
}

.navright {
  margin-left: auto;
  margin-right: 25px;
  display: flex;
  gap: 20px;
}

.navright .navuser {
  margin-left: 2px;
}

.caret {
  display: inline-block;
  width: 0;
  height: 0;
  margin-left: 5px;
  border-top: 4px solid white;
  border-left: 4px solid transparent;
  border-right: 4px solid transparent;
}

.navuser .caret {
  margin-left: 1px;
}

.ico-user {
  width: 12px;
  height: 14px;
  margin-right: 6px;
}

.tray {
  position: absolute;
  top: 60px;
  right: 0;
  width: 51px;
  height: 30px;
  background-color: #e4e4e4;
  padding: 7px 0 0 6px;
}

.tray-ico {
  display: block;
  width: 16px;
  height: 16px;
}

/* page body */
.content {
  flex: 1;
  min-height: 0;
  overflow: hidden;
  padding: 44px 15px 0;
}

.titlebar {
  height: 35px;
  display: flex;
  align-items: center;
  margin-bottom: 30px;
}

.check {
  width: 31px;
  height: 25px;
  margin-right: 5px;
  flex: none;
}

.title {
  margin: 0;
  padding-bottom: 4px;
  font-size: 33.7px;
  font-weight: normal;
  color: #18bc9c;
  line-height: 35px;
  white-space: nowrap;
}

.btn {
  height: 35px;
  border: none;
  border-radius: 3px;
  padding: 0 11px 2px;
  font-family: Lato, sans-serif;
  font-size: 13px;
  color: white;
  display: inline-flex;
  align-items: center;
  white-space: nowrap;
}

.btn-ic {
  padding-left: 13px;
  padding-right: 10px;
}

.btn-red { background-color: #e74c3c; }
.btn-grey { background-color: #95a5a6; }
.btn-off { background-color: #b9c4c4; }
.btn-navy { background-color: #2c3e50; }
.btn-orange { background-color: #f39c12; }
.btn-blue { background-color: #3498db; }

.btn-first {
  margin-left: 30px;
  margin-right: 10px;
}

.ico {
  width: 12px;
  height: 13px;
  margin-right: 3px;
}

.ico-pin {
  width: 9px;
  margin-right: 3px;
}

.grid {
  display: grid;
  grid-template-columns: repeat(3, 519px);
  grid-template-rows: auto auto;
  column-gap: 30px;
}

.col-left {
  grid-column: 1;
  grid-row: 1 / span 2;
}

.panel-deps {
  grid-column: 2 / span 2;
  grid-row: 2;
}

.panel {
  background-color: white;
  border: 1px solid #eef1f2;
  border-radius: 4px;
  box-shadow: 0 1px 1px rgba(0, 0, 0, .05);
  margin-bottom: 21px;
}

.panel-head {
  height: 46px;
  background-color: #ecf0f1;
  margin: -1px -1px 0;
  border-radius: 4px 4px 0 0;
  padding: 0 16px;
  font-size: 17px;
  line-height: 46px;
  position: relative;
}

.btn-dots {
  position: absolute;
  top: 5px;
  right: 16px;
  width: 25px;
  padding: 0;
  justify-content: center;
}

.panel-body {
  padding: 15px;
}

.field {
  display: grid;
  grid-template-columns: 146px 1fr;
  margin-bottom: 5px;
}

.field label, .dialog-row label {
  font-weight: bold;
  font-size: 15.2px;
  line-height: 25px;
  color: #2c3e50;
}

em {
  font-style: normal;
  color: #d9304f;
  position: relative;
  top: -1px;
}

.em-orange {
  color: #d9603c;
}

.input {
  height: 35px;
  background-color: #ecf0f1;
  border: 2px solid #dce4ec;
  border-radius: 3px;
  padding: 0 9px;
  font-size: 13px;
  line-height: 33px;
  color: #2c3e50;
}

.checkbox {
  width: 30px;
  height: 30px;
  border: 1px solid #dce4ec;
  border-radius: 4px;
  background-color: #fdfdfd;
}

.actions {
  margin-bottom: 10px;
}

.btnrow {
  display: flex;
  gap: 10px;
}

.dialog {
  border: 2px solid #2c3e50;
  height: 119px;
  margin: 2px 0 0;
  padding: 8px 10px 0;
}

.dialog-row {
  display: flex;
}

.dialog-row label {
  width: 121px;
  padding-left: 10px;
  margin-top: 2px;
}

.input-focus {
  width: 310px;
  height: 35px;
  margin: 3px 0 0 12px;
  background-color: white;
  border: 2px solid #2c3e50;
  outline: 2px solid #48dbb9;
  padding: 0 9px;
  line-height: 31px;
}

.dialog-btns {
  display: flex;
  gap: 3px;
  margin-top: 24px;
  position: relative;
}

.hand {
  position: absolute;
  left: 18px;
  top: 14px;
  width: 16px;
  height: 22px;
}

.body-other {
  padding-bottom: 34px;
}

.head-deps {
  display: flex;
  justify-content: space-between;
}

.head-btns {
  display: flex;
  align-items: flex-start;
  padding-top: 4px;
  gap: 10px;
}

.head-btns .btn-ic {
  padding-right: 11px;
}

.head-btns .btn-blue {
  margin-left: 8px;
  width: 87px;
  padding: 0 0 2px 10px;
}

.caret-map {
  margin-left: 21px;
}

.body-map {
  padding: 45px 15px 0;
}

.map {
  position: relative;
  height: 340px;
  overflow: hidden;
}

.mapsvg {
  display: block;
}

.maptype {
  position: absolute;
  top: 10px;
  left: 10px;
  height: 29px;
  display: flex;
  background-color: white;
  border-radius: 2px;
  font-family: Roboto, sans-serif;
  font-size: 11px;
  line-height: 29px;
  color: #565656;
  box-shadow: 0 1px 3px rgba(0, 0, 0, .2);
}

.maptype span {
  padding: 0 8px;
}

.maptype .maptype-on {
  font-weight: bold;
  color: #111;
  border-right: 1px solid #e6e6e6;
}

/* map layers */
.beige polygon { fill: #ecebe1; }
.park polygon { fill: #cbe6a3; }
.park-pale polygon { fill: #d8e8c6; }
.water polygon { fill: #a3ccff; }

.stream polyline, .rail polyline, .rd polyline, .mw polyline, .mway {
  fill: none;
  vector-effect: non-scaling-stroke;
  stroke-linejoin: round;
  stroke-linecap: round;
}

.stream polyline { stroke: #a3ccff; stroke-width: 1; }
.rail polyline { stroke: #cfcfcf; stroke-width: 2; }
.rd polyline { stroke: white; stroke-width: 2; }
.rd-min polyline { stroke: #f7f7f7; stroke-width: 1; }
.mw polyline { stroke: #f7d98a; stroke-width: 3; }
.mway { stroke: #f4b85e; stroke-width: 3; }

.lb text {
  font-family: Roboto, sans-serif;
  font-size: 10px;
  fill: #858585;
  text-anchor: middle;
  dominant-baseline: central;
  paint-order: stroke;
  stroke: rgba(255, 255, 255, .6);
  stroke-width: 2px;
}

.lb .lb-rn { fill: #86622f; }
.lb .lb-area { fill: #8a7f6a; font-size: 10px; font-weight: 500; letter-spacing: .3px; }
.lb .lb-town { fill: #5e5a50; font-size: 14px; }
.lb .lb-park { fill: #3f8f12; font-size: 14px; font-style: italic; }
.lb .lb-big { fill: #7f6f58; font-size: 15px; font-weight: 500; letter-spacing: 1.2px; }
.lb .lb-poi { fill: #6d5545; font-size: 14px; }
.lb .lb-hosp { fill: #7c3232; font-size: 14px; }

.pin path { fill: #ef5a50; stroke: #c4392f; stroke-width: .6; }
.pin circle { fill: #5c0d08; }

/* footer */
.footer {
  height: 59px;
  flex: none;
  background-color: #2c3e50;
  color: white;
  display: flex;
  align-items: center;
  padding: 0 10px 2px 30px;
  position: relative;
}

.themebox {
  width: 300px;
  height: 28px;
  margin-top: -15px;
  background-color: white;
  border: 1px solid #aaa;
  border-radius: 3px;
  position: relative;
}

.themebox-arrow {
  position: absolute;
  right: 5px;
  top: 12px;
  border-top: 6px solid #888;
  border-left: 4px solid transparent;
  border-right: 4px solid transparent;
}

.footright {
  margin-left: auto;
  display: flex;
  align-items: center;
  font-size: 15px;
  white-space: nowrap;
}

.foot-pow { margin-right: 10px; }
.foot-isis { margin-right: 21px; font-size: 15.3px; }
.foot-about { margin-right: 3px; }
.warn { width: 21px; height: 20px; margin-right: 24px; }

.caret-up {
  border-top: none;
  border-bottom: 4px solid white;
  margin-left: 1px;
  vertical-align: 3px;
}

/* scrollbar */
.scrollbar {
  width: 18px;
  flex: none;
  background-color: #f1f1f1;
  display: flex;
  flex-direction: column;
  align-items: center;
  justify-content: space-between;
}

.arrow {
  flex: none;
  margin: 6px 0;
  border-left: 4px solid transparent;
  border-right: 4px solid transparent;
}

.arrow-up { border-bottom: 4px solid #a0a0a0; }
.arrow-down { border-top: 4px solid #505050; }

.track {
  flex: 1;
  width: 100%;
}

.thumb {
  height: 673px;
  margin: 1px 1px 0 2px;
  background-color: #c1c1c1;
}
```
